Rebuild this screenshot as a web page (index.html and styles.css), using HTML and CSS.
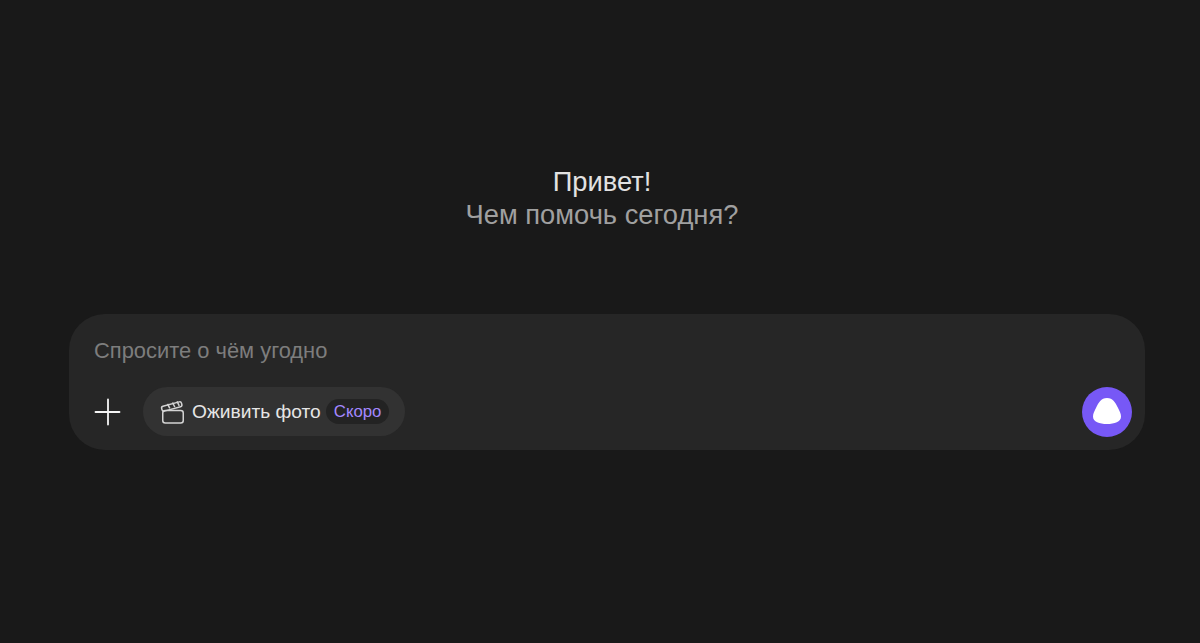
FILE: index.html

```html
<!DOCTYPE html>
<html lang="ru">
<head>
  <meta charset="UTF-8" />
  <meta name="viewport" content="width=device-width, initial-scale=1" />
  <title>Алиса</title>
  <link rel="stylesheet" href="styles.css">
</head>
<body>
<main class="page">
  <div class="greeting">
    <div class="greeting-title">Привет!</div>
    <div class="greeting-sub">Чем помочь сегодня?</div>
  </div>
  <div class="composer">
    <div class="composer-input">Спросите о чём угодно</div>
    <div class="composer-bar">
      <button class="plus-btn" aria-label="Добавить">
        <svg width="28" height="28" viewBox="0 0 28 28" fill="none" stroke="#f5f5f5" stroke-width="1.8" stroke-linecap="round">
          <path d="M14 1.500V26.500M1.500 14H25.500" />
        </svg>
      </button>
      <div class="chip">
        <svg class="chip-icon" width="24" height="24" viewBox="0 0 24 24" fill="none" stroke="#d4d4d4" stroke-width="1.5" stroke-linejoin="round">
          <rect x="2.750" y="10.500" width="20.500" height="12.500" rx="2.500" />
          <rect x="1.500" y="4" width="20.500" height="5" rx="1.800" transform="rotate(-15 11.750 6.500)" />
          <path d="M7.500 3.800L9.800 8.300M12.500 2.500L14.800 7M17 1.300L19.300 5.800" />
        </svg>
        <span class="chip-label">Оживить фото</span>
        <span class="chip-badge">Скоро</span>
      </div>
      <button class="send-btn" aria-label="Алиса">
        <svg width="28" height="26" viewBox="0 0 28 26">
          <path fill="#fff" d="M14 0C20 0 22.500 5 24.800 9.500C26.500 13 28 15.500 28 18.500C28 24 21.500 26 14 26C6.500 26 0 24 0 18.500C0 15.500 1.500 13 3.200 9.500C5.500 5 8 0 14 0Z" />
        </svg>
      </button>
    </div>
  </div>
</main>
</body>
</html>
```

FILE: styles.css

```css
* { box-sizing: border-box; }
html, body { height: 100%; }
body {
  margin: 0;
  font-family: 'Liberation Sans', Arial, sans-serif;
  background: #191919;
  color: #e6e6e6;
  overflow: hidden;
}
.page {
  height: 100%;
  padding: 165px 55px 0 69px;
}
.greeting {
  text-align: center;
  font-size: 27.3px;
  line-height: 33px;
  margin-bottom: 83px;
  margin-left: -10px;
}
.greeting-title { color: #e2e2e2; }
.greeting-sub { color: #a0a0a0; }
.composer {
  height: 136px;
  background: #262626;
  border-radius: 36px;
  padding: 23px 13px 13px 25px;
}
.composer-input {
  font-size: 21.9px;
  line-height: 28px;
  color: #7d7d7d;
  margin-bottom: 22px;
}
.composer-bar {
  display: flex;
  align-items: flex-start;
  height: 50px;
}
button {
  border: none;
  padding: 0;
  background: none;
  cursor: pointer;
}
.plus-btn {
  display: flex;
  width: 28px;
  height: 28px;
  margin: 11px 21px 0 0;
}
.chip {
  display: flex;
  align-items: center;
  height: 49px;
  padding: 0 16px 0 18px;
  background: #323232;
  border-radius: 25px;
}
.chip-icon { margin: 0 8px 0 -1px; }
.chip-label {
  font-size: 19.2px;
  color: #e6e6e6;
}
.chip-badge {
  margin-left: 5px;
  padding: 0 8px;
  height: 25px;
  line-height: 25px;
  font-size: 16.8px;
  color: #a388ff;
  background: #232323;
  border-radius: 13px;
}
.send-btn {
  margin-left: auto;
  display: flex;
  align-items: center;
  justify-content: center;
  width: 50px;
  height: 50px;
  padding-bottom: 3px;
  background: #7758f6;
  border-radius: 50%;
}
```
